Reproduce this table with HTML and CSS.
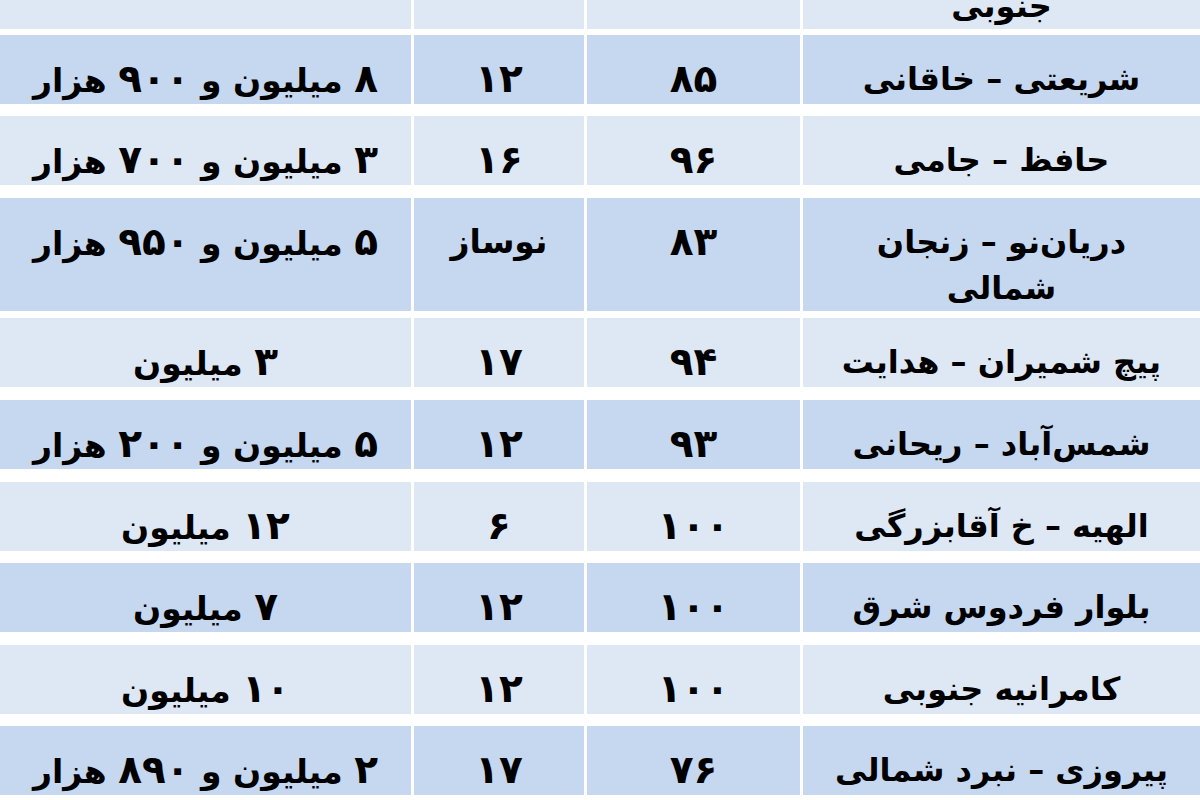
FILE: index.html
```html
<!DOCTYPE html>
<html lang="fa" dir="rtl">
<head>
<meta charset="utf-8">
<title>جدول اجاره</title>
<link rel="stylesheet" href="styles.css">
</head>
<body>
<div class="table">
  <div class="row light partial">
    <div class="cell place">جنوبی</div>
    <div class="cell num"></div>
    <div class="cell num"></div>
    <div class="cell price"></div>
  </div>
  <div class="row dark">
    <div class="cell place">شریعتی – خاقانی</div>
    <div class="cell num">۸۵</div>
    <div class="cell num">۱۲</div>
    <div class="cell price"><span class="d">۸</span> میلیون و <span class="d">۹۰۰</span> هزار</div>
  </div>
  <div class="row light">
    <div class="cell place">حافظ – جامی</div>
    <div class="cell num">۹۶</div>
    <div class="cell num">۱۶</div>
    <div class="cell price"><span class="d">۳</span> میلیون و <span class="d">۷۰۰</span> هزار</div>
  </div>
  <div class="row dark tall">
    <div class="cell place">دریان‌نو – زنجان<br>شمالی</div>
    <div class="cell num">۸۳</div>
    <div class="cell word">نوساز</div>
    <div class="cell price"><span class="d">۵</span> میلیون و <span class="d">۹۵۰</span> هزار</div>
  </div>
  <div class="row light">
    <div class="cell place">پیچ شمیران – هدایت</div>
    <div class="cell num">۹۴</div>
    <div class="cell num">۱۷</div>
    <div class="cell price"><span class="d">۳</span> میلیون</div>
  </div>
  <div class="row dark">
    <div class="cell place">شمس‌آباد – ریحانی</div>
    <div class="cell num">۹۳</div>
    <div class="cell num">۱۲</div>
    <div class="cell price"><span class="d">۵</span> میلیون و <span class="d">۲۰۰</span> هزار</div>
  </div>
  <div class="row light">
    <div class="cell place">الهیه – خ آقابزرگی</div>
    <div class="cell num">۱۰۰</div>
    <div class="cell num">۶</div>
    <div class="cell price"><span class="d">۱۲</span> میلیون</div>
  </div>
  <div class="row dark">
    <div class="cell place">بلوار فردوس شرق</div>
    <div class="cell num">۱۰۰</div>
    <div class="cell num">۱۲</div>
    <div class="cell price"><span class="d">۷</span> میلیون</div>
  </div>
  <div class="row light">
    <div class="cell place">کامرانیه جنوبی</div>
    <div class="cell num">۱۰۰</div>
    <div class="cell num">۱۲</div>
    <div class="cell price"><span class="d">۱۰</span> میلیون</div>
  </div>
  <div class="row dark">
    <div class="cell place">پیروزی – نبرد شمالی</div>
    <div class="cell num">۷۶</div>
    <div class="cell num">۱۷</div>
    <div class="cell price"><span class="d">۲</span> میلیون و <span class="d">۸۹۰</span> هزار</div>
  </div>
</div>
</body>
</html>
```

FILE: styles.css
```css
html, body {
  margin: 0;
  padding: 0;
  background: #ffffff;
}
body {
  width: 1200px;
  height: 800px;
  overflow: hidden;
  font-family: "DejaVu Sans", sans-serif;
  font-weight: bold;
  color: #000000;
}
.table {
  display: flex;
  flex-direction: column;
  gap: 12.6px;
  margin-top: -47px;
}
.row {
  display: grid;
  grid-template-columns: 397px 213px 170px 1fr;
  column-gap: 3px;
  height: 69px;
}
.row.tall {
  height: 108px;
}
.cell {
  text-align: center;
  font-size: 32px;
  line-height: 46px;
  padding-top: 21px;
  white-space: nowrap;
}
.cell.num {
  font-size: 39px;
}
.cell.word {
  font-size: 33px;
}
.cell.price {
  font-size: 33px;
}
.cell.price .d {
  font-size: 39px;
}
.row.partial .cell {
  padding-top: 30px;
}
.dark .cell {
  background: #c5d8f0;
}
.light .cell {
  background: #dee8f5;
}
```
